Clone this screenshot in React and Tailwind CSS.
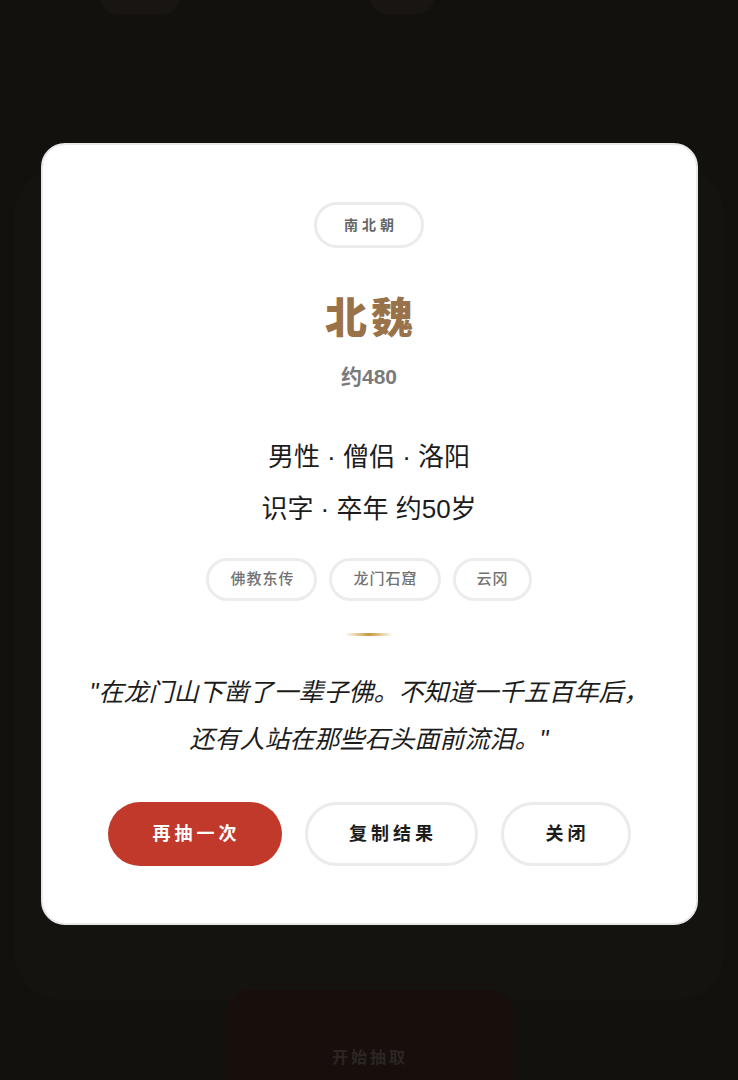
export default function App() {
  const tags = ['佛教东传', '龙门石窟', '云冈'];

  return (
    <div
      className="relative h-[1080px] w-full overflow-hidden bg-[#13110e]"
      style={{ fontFamily: '"Liberation Sans", "Noto Sans CJK SC", sans-serif' }}
    >
      {/* dimmed page behind the overlay */}
      <div className="absolute left-[100px] top-[-20px] h-[34px] w-[80px] rounded-full bg-[#181512]" />
      <div className="absolute left-[370px] top-[-20px] h-[34px] w-[64px] rounded-full bg-[#181512]" />
      <div className="absolute left-[14px] top-[168px] h-[832px] w-[710px] rounded-[48px] bg-[#15130f]" />
      <div className="absolute left-[226px] top-[990px] flex h-[110px] w-[288px] items-start justify-center rounded-[24px] bg-[#180f0c] pt-[56px]">
        <span className="text-[16px] font-bold tracking-[3px] text-[#2c2623]">开始抽取</span>
      </div>

      {/* result dialog */}
      <div className="relative flex justify-center pt-[143px]">
        <div className="flex w-[657px] flex-col items-center rounded-[24px] border-2 border-[#e8e8e8] bg-white px-[40px] pb-[57px] pt-[57px]">
          <div className="flex h-[46px] w-[110px] items-center justify-center rounded-full border-[3px] border-[#ebebeb] pl-[4px]">
            <span className="text-[14px] font-semibold tracking-[4px] text-[#666666]">南北朝</span>
          </div>

          <h1 className="mt-[47px] pl-[4px] text-[42px] font-black leading-[48px] tracking-[4px] text-[#9a7249]">
            北魏
          </h1>

          <div className="mt-[20px] text-[21px] font-semibold leading-[28px] text-[#7a7a7a]">约480</div>

          <div className="mt-[40px] text-center text-[26px] leading-[52px] text-[#1c1c1c]">
            <div>男性 · 僧侣 · 洛阳</div>
            <div>识字 · 卒年 约50岁</div>
          </div>

          <div className="mt-[23px] flex gap-[12px]">
            {tags.map((t) => (
              <div
                key={t}
                className="flex h-[43px] items-center rounded-full border-[3px] border-[#ececec] px-[20px] pl-[21px]"
              >
                <span className="text-[15px] font-medium tracking-[1px] text-[#737373]">{t}</span>
              </div>
            ))}
          </div>

          <div className="mt-[32px] h-[3px] w-[48px] rounded-full bg-gradient-to-r from-transparent via-[#c9983e] to-transparent" />

          <p className="mt-[33px] text-center text-[25px] italic leading-[47px] text-[#1c1c1c]">
            "在龙门山下凿了一辈子佛。不知道一千五百年后，
            <br />
            还有人站在那些石头面前流泪。"
          </p>

          <div className="mt-[39px] flex gap-[23px]">
            <button className="flex h-[64px] w-[174px] items-center justify-center rounded-full bg-[#c0392b] pl-[4px] text-[18px] font-bold tracking-[4px] text-white">
              再抽一次
            </button>
            <button className="flex h-[64px] w-[173px] items-center justify-center rounded-full border-[3px] border-[#ebebeb] bg-white pl-[4px] text-[18px] font-bold tracking-[4px] text-[#1c1c1c]">
              复制结果
            </button>
            <button className="flex h-[64px] w-[130px] items-center justify-center rounded-full border-[3px] border-[#ebebeb] bg-white pl-[4px] text-[18px] font-bold tracking-[4px] text-[#1c1c1c]">
              关闭
            </button>
          </div>
        </div>
      </div>
    </div>
  );
}
